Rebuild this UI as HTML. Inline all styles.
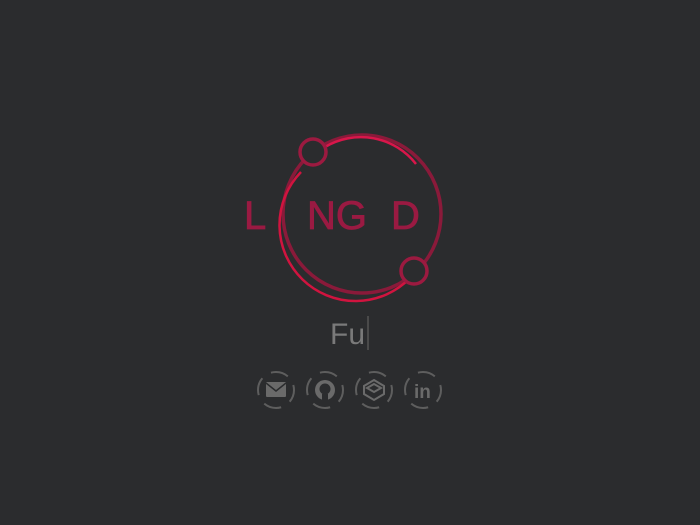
<!DOCTYPE html>
<html><head><style>
html,body{margin:0;padding:0;background:#2b2c2e;width:700px;height:525px;overflow:hidden;font-family:"Liberation Sans",sans-serif}
svg{position:absolute;left:0;top:0}
</style></head><body>
<svg width="700" height="525" viewBox="0 0 700 525">
<g fill="none">
<circle cx="362" cy="214" r="79" stroke="#8a1a3a" stroke-width="3.5"/>
<path d="M325 147 A70 70 0 0 1 416 164" stroke="#d8164a" stroke-width="2.5"/>
<path d="M301 172 A72 72 0 0 0 410 278" stroke="#d0143f" stroke-width="2.5"/>
<circle cx="313" cy="152" r="13" fill="#2b2c2e" stroke="#9c1a40" stroke-width="3.5"/>
<circle cx="414" cy="271" r="13" fill="#2b2c2e" stroke="#9c1a40" stroke-width="3.5"/>
</g>
<g fill="#9a1a42" stroke="#9a1a42" stroke-width="0.8" font-family="Liberation Sans" font-size="40">
<text x="244" y="229">L</text>
<text x="307" y="229">NG</text>
<text x="391" y="229">D</text>
</g>
<text x="330" y="344" fill="#7a7a7a" font-size="30">Fu</text>
<rect x="367" y="316" width="2" height="34" fill="#4a4a4a"/>
<g stroke="#5e5e5e" stroke-width="2" fill="none" stroke-dasharray="18 10.27" stroke-dashoffset="-23">
<circle cx="276" cy="390" r="18"/>
<circle cx="325" cy="390" r="18"/>
<circle cx="374" cy="390" r="18"/>
<circle cx="423" cy="390" r="18"/>
</g>
<g fill="#6a6a6a">
<rect x="266" y="382" width="20" height="15" rx="1"/>
<path d="M266 383 L276 391 L286 383" stroke="#2b2c2e" stroke-width="1.5" fill="none"/>
<circle cx="325" cy="390" r="10"/>
<circle cx="325" cy="389" r="5.5" fill="#2b2c2e"/>
<rect x="322" y="394" width="6" height="6" fill="#2b2c2e"/>
<path d="M374 380 L384 386 L384 394 L374 400 L364 394 L364 386 Z M374 384 L367 388 L374 392 L381 388 Z" fill="none" stroke="#6a6a6a" stroke-width="2"/>
<text x="414" y="398" font-size="19" font-weight="bold">in</text>
</g>
</svg>
</body></html>
